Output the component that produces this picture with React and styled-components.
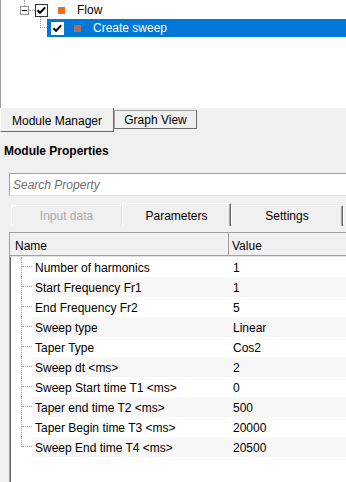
import React from "react";
import styled, { createGlobalStyle } from "styled-components";

const GlobalStyle = createGlobalStyle`
    html, body {
        margin: 0;
        padding: 0;
        background: #f0f0f0;
    }
    body {
        font-family: "Liberation Sans", Arial, sans-serif;
        font-size: 12px;
        color: #000;
    }
`;

const Window = styled.div`
    width: 346px;
    height: 482px;
    overflow: hidden;
    background: #f0f0f0;
    display: flex;
    flex-direction: column;
`;

/* ---------- tree ---------- */

const TreePanel = styled.div`
    height: 108px;
    flex: none;
    box-sizing: border-box;
    background: #fff;
    border-left: 1px solid #a0a0a0;
    padding-top: 1px;
`;

const TreeRow = styled.div`
    display: flex;
    align-items: center;
    height: 18px;
    padding-left: ${(p) => p.$indent}px;
`;

const ExpandBox = styled.div`
    width: 9px;
    height: 9px;
    flex: none;
    box-sizing: border-box;
    border: 1px solid #919191;
    background: #fff;
    position: relative;

    &::before {
        content: "";
        position: absolute;
        left: 3px;
        top: -7px;
        height: 6px;
        border-left: 1px dotted #a0a0a0;
    }

    &::after {
        content: "";
        position: absolute;
        left: 1px;
        right: 1px;
        top: 3px;
        height: 1px;
        background: #000;
    }
`;

const DotLine = styled.div`
    width: 6px;
    flex: none;
    border-top: 1px dotted #a0a0a0;
`;

const Elbow = styled.div`
    width: 6px;
    height: 10px;
    flex: none;
    align-self: flex-start;
    margin-top: -2px;
    border-left: 1px dotted #a0a0a0;
    border-bottom: 1px dotted #a0a0a0;
`;

const CheckBox = styled.div`
    width: 13px;
    height: 13px;
    flex: none;
    box-sizing: border-box;
    border: 1px solid ${(p) => (p.$light ? "#fff" : "#333")};
    background: #fff;
    display: flex;
    align-items: center;
    justify-content: center;
`;

const NodeIcon = styled.div`
    width: 7px;
    height: 7px;
    flex: none;
    margin-left: 10px;
    background: ${(p) => p.$color};
`;

const NodeLabel = styled.span`
    margin-left: 12px;
    white-space: nowrap;
`;

const Selected = styled.div`
    flex: 1;
    height: 18px;
    display: flex;
    align-items: center;
    padding-left: 4px;
    background: #0078d7;
    color: #fff;
`;

const Check = () => (
    <svg width="11" height="11" viewBox="0 0 11 11">
        <path d="M1.5 5.2 L4 7.8 L9.2 2.4" fill="none" stroke="#000" strokeWidth="2" />
    </svg>
);

/* ---------- bottom tabs ---------- */

const BottomStrip = styled.div`
    display: flex;
    align-items: flex-start;
    height: 24px;
    flex: none;
`;

const BottomTab = styled.div`
    box-sizing: border-box;
    display: flex;
    align-items: center;
    justify-content: center;
    width: ${(p) => p.$width}px;
    height: ${(p) => (p.$active ? 24 : 19)}px;
    margin-top: ${(p) => (p.$active ? 0 : 2)}px;
    padding-top: ${(p) => (p.$active ? 2 : 0)}px;
    background: #f0f0f0;
    border: 1px solid #a0a0a0;
    border-top: ${(p) => (p.$active ? "none" : "1px solid #a0a0a0")};
    border-left-color: ${(p) => (p.$active ? "#fff" : "#a0a0a0")};
    border-right-color: #696969;
    border-bottom-color: #696969;
`;

/* ---------- properties ---------- */

const SectionTitle = styled.div`
    font-weight: bold;
    line-height: 18px;
    margin-top: 10px;
    padding-left: 4px;
`;

const SearchInput = styled.input`
    box-sizing: border-box;
    width: 360px;
    height: 23px;
    flex: none;
    margin: 13px 0 0 9px;
    padding: 0 0 0 3px;
    border: 1px solid #e3e3e3;
    border-top-color: #a0a0a0;
    border-left-color: #a0a0a0;
    background: #fff;
    font-family: inherit;
    font-size: 12px;
    outline: none;

    &::placeholder {
        color: #6d6d6d;
        font-style: italic;
    }
`;

const TabRow = styled.div`
    display: flex;
    align-items: flex-end;
    height: 23px;
    flex: none;
    margin-top: 7px;
    padding-left: 11px;
`;

const PropTab = styled.div`
    box-sizing: border-box;
    flex: none;
    width: ${(p) => p.$width}px;
    height: ${(p) => (p.$active ? 23 : 21)}px;
    display: flex;
    align-items: center;
    justify-content: center;
    padding-top: ${(p) => (p.$active ? 1 : 0)}px;
    border-top: 1px solid #fff;
    border-left: 1px solid #fff;
    border-right: 1px solid ${(p) => (p.$disabled ? "#e3e3e3" : "#696969")};
    box-shadow: ${(p) => (p.$disabled ? "none" : "inset -1px 0 0 #a0a0a0")};
    color: ${(p) => (p.$disabled ? "#a9a9a9" : "#000")};
    white-space: nowrap;
`;

const Grid = styled.div`
    flex: 1;
    margin: 6px 0 0 9px;
    background: #fff;
    border-top: 1px solid #a0a0a0;
    border-left: 1px solid #a0a0a0;
    box-shadow: inset 1px 1px 0 #696969;
    min-width: 360px;
`;

const HeaderRow = styled.div`
    display: flex;
    height: 22px;
    border-bottom: 1px solid #a0a0a0;
    box-shadow: 0 1px 0 #e3e3e3;
    margin-bottom: 1px;
`;

const HeadCell = styled.div`
    box-sizing: border-box;
    display: flex;
    align-items: center;
    padding: 4px 0 0 ${(p) => p.$pad}px;
    width: ${(p) => (p.$width ? `${p.$width}px` : "auto")};
    flex: ${(p) => (p.$width ? "none" : 1)};
    background: #f0f0f0;
    border-right: ${(p) => (p.$width ? "1px solid #a0a0a0" : "none")};
    box-shadow: ${(p) => (p.$width ? "1px 0 0 #fff" : "none")};
`;

const PropRow = styled.div`
    display: flex;
    height: 20px;
`;

const Guide = styled.div`
    flex: none;
    align-self: flex-start;
    width: 10px;
    height: ${(p) => (p.$last ? 10 : 20)}px;
    margin-left: 11px;
    border-left: 1px dotted #a0a0a0;
`;

const GuideArm = styled.div`
    height: 9px;
    border-bottom: 1px dotted #a0a0a0;
`;

const Band = styled.div`
    flex: 1;
    display: flex;
    align-items: center;
    padding-top: 1px;
    background: ${(p) => (p.$alt ? "#f7f7f7" : "#fff")};
`;

const NameCell = styled.div`
    box-sizing: border-box;
    width: 197px;
    flex: none;
    padding-left: 3px;
    white-space: nowrap;
`;

const ValueCell = styled.div`
    padding-left: 4px;
    white-space: nowrap;
`;

const props = [
    ["Number of harmonics", "1"],
    ["Start Frequency Fr1", "1"],
    ["End Frequency Fr2", "5"],
    ["Sweep type", "Linear"],
    ["Taper Type", "Cos2"],
    ["Sweep dt <ms>", "2"],
    ["Sweep Start time T1 <ms>", "0"],
    ["Taper end time T2 <ms>", "500"],
    ["Taper Begin time T3 <ms>", "20000"],
    ["Sweep End time T4 <ms>", "20500"],
];

const App = () => {
    return (
        <Window>
            <GlobalStyle />
            <TreePanel>
                <TreeRow $indent={19}>
                    <ExpandBox />
                    <DotLine />
                    <CheckBox><Check /></CheckBox>
                    <NodeIcon $color="#ea6a1e" />
                    <NodeLabel>Flow</NodeLabel>
                </TreeRow>
                <TreeRow $indent={39}>
                    <Elbow />
                    <Selected>
                        <CheckBox $light><Check /></CheckBox>
                        <NodeIcon $color="#a86f62" />
                        <NodeLabel>Create sweep</NodeLabel>
                    </Selected>
                </TreeRow>
            </TreePanel>

            <BottomStrip>
                <BottomTab $active $width={114}>Module Manager</BottomTab>
                <BottomTab $width={83}>Graph View</BottomTab>
            </BottomStrip>

            <SectionTitle>Module Properties</SectionTitle>
            <SearchInput placeholder="Search Property" />

            <TabRow>
                <PropTab $disabled $width={111}>Input data</PropTab>
                <PropTab $active $width={109}>Parameters</PropTab>
                <PropTab $width={112}>Settings</PropTab>
                <PropTab $width={40} />
            </TabRow>

            <Grid>
                <HeaderRow>
                    <HeadCell $width={219} $pad={5}>Name</HeadCell>
                    <HeadCell $pad={3}>Value</HeadCell>
                </HeaderRow>
                {props.map(([name, value], i) => (
                    <PropRow key={name}>
                        <Guide $last={i === props.length - 1}>
                            <GuideArm />
                        </Guide>
                        <Band $alt={i % 2 === 1}>
                            <NameCell>{name}</NameCell>
                            <ValueCell>{value}</ValueCell>
                        </Band>
                    </PropRow>
                ))}
            </Grid>
        </Window>
    );
};

export default App;
